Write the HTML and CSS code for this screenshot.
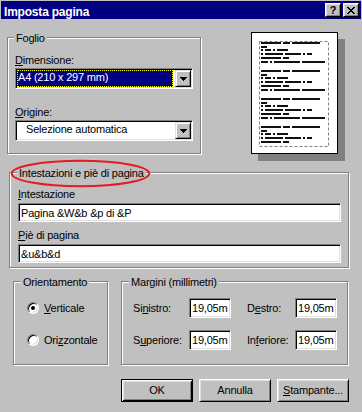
FILE: index.html
```html
<!DOCTYPE html>
<html lang="it">
<head>
  <meta charset="UTF-8">
  <title>Imposta pagina</title>
  <link rel="stylesheet" href="styles.css">
</head>
<body>
  <div class="dialog">
    <div class="titlebar">
      <span class="title">Imposta pagina</span>
      <div class="title-btns">
        <div class="tbtn help">?</div>
        <div class="tbtn">
          <svg width="8" height="7" viewBox="0 0 8 7"><path d="M0 0h2v1H0zM6 0h2v1H6zM1 1h2v1H1zM5 1h2v1H5zM2 2h4v1H2zM3 3h2v1H3zM2 4h4v1H2zM1 5h2v1H1zM5 5h2v1H5zM0 6h2v1H0zM6 6h2v1H6z"/></svg>
        </div>
      </div>
    </div>

    <div class="row top-row">
      <div class="group foglio">
        <div class="group-title">Foglio</div>
        <div class="label first"><u>D</u>imensione:</div>
        <div class="combo">
          <div class="combo-value selected">A4 (210 x 297 mm)</div>
          <div class="combo-arrow"><svg width="7" height="4" viewBox="0 0 7 4"><path d="M0 0h7v1H0zM1 1h5v1H1zM2 2h3v1H2zM3 3h1v1H3z"/></svg></div>
        </div>
        <div class="label gap"><u>O</u>rigine:</div>
        <div class="combo">
          <div class="combo-value indent">Selezione automatica</div>
          <div class="combo-arrow"><svg width="7" height="4" viewBox="0 0 7 4"><path d="M0 0h7v1H0zM1 1h5v1H1zM2 2h3v1H2zM3 3h1v1H3z"/></svg></div>
        </div>
      </div>

      <!-- anteprima pagina -->
      <div class="preview">
        <svg width="85" height="120" viewBox="0 0 85 120">
          <rect x="7.5" y="8.5" width="69" height="105" fill="none" stroke="#808080" stroke-dasharray="3 2"/>
          <g fill="#111">
            <path d="M9 9h20v2H9zM31 9h7v2h-7zM40 9h28v2H40zM9 13h6v2H9zM9 16h2v2H9zM13 16h6v2h-6zM21 16h2v2h-2zM25 16h11v2H25zM9 20h2v2H9zM13 20h18v2H13zM33 20h16v2H33zM51 20h2v2h-2zM55 20h5v2h-5zM9 24h20v2H9zM31 24h6v2h-6zM9 28h7v2H9zM18 28h2v2h-2zM22 28h26v2H22zM50 28h23v2H50z"/>
            <path transform="translate(0 28)" d="M9 9h20v2H9zM31 9h7v2h-7zM40 9h28v2H40zM9 13h6v2H9zM9 16h2v2H9zM13 16h6v2h-6zM21 16h2v2h-2zM25 16h11v2H25zM9 20h2v2H9zM13 20h18v2H13zM33 20h16v2H33zM51 20h2v2h-2zM55 20h5v2h-5zM9 24h20v2H9zM31 24h6v2h-6zM9 28h7v2H9zM18 28h2v2h-2zM22 28h26v2H22zM50 28h23v2H50z"/>
            <path transform="translate(0 56)" d="M9 9h20v2H9zM31 9h7v2h-7zM40 9h28v2H40zM9 13h6v2H9zM9 16h2v2H9zM13 16h6v2h-6zM21 16h2v2h-2zM25 16h11v2H25zM9 20h2v2H9zM13 20h18v2H13zM33 20h16v2H33zM51 20h2v2h-2zM55 20h5v2h-5zM9 24h20v2H9zM31 24h6v2h-6zM9 28h7v2H9zM18 28h2v2h-2zM22 28h26v2H22zM50 28h23v2H50z"/>
            <path transform="translate(0 84)" d="M9 9h20v2H9zM31 9h7v2h-7zM40 9h28v2H40zM9 13h6v2H9zM9 16h2v2H9zM13 16h6v2h-6zM21 16h2v2h-2zM25 16h11v2H25zM9 20h2v2H9zM13 20h18v2H13zM33 20h16v2H33zM51 20h2v2h-2zM55 20h5v2h-5zM9 24h20v2H9zM31 24h6v2h-6z"/>
          </g>
        </svg>
      </div>
    </div>

    <div class="group headers">
      <div class="group-title">Intestazioni e piè di pagina</div>
      <div class="label h-first"><u>I</u>ntestazione</div>
      <input class="edit wide" type="text" value="Pagina &amp;W&amp;b &amp;p di &amp;P">
      <div class="label h-gap"><u>P</u>iè di pagina</div>
      <input class="edit wide" type="text" value="&amp;u&amp;b&amp;d">
    </div>

    <div class="row bottom-row">
      <div class="group orient">
        <div class="group-title">Orientamento</div>
        <div class="radio-row first">
          <span class="radio checked"></span>
          <span><u>V</u>erticale</span>
        </div>
        <div class="radio-row second">
          <span class="radio"></span>
          <span>Ori<u>z</u>zontale</span>
        </div>
      </div>

      <div class="group margins">
        <div class="group-title">Margini (millimetri)</div>
        <div class="margin-row first">
          <span class="m-label">Si<u>n</u>istro:</span>
          <input class="edit small" type="text" value="19,05mm">
          <span class="m-label right">D<u>e</u>stro:</span>
          <input class="edit small" type="text" value="19,05mm">
        </div>
        <div class="margin-row second">
          <span class="m-label">S<u>u</u>periore:</span>
          <input class="edit small" type="text" value="19,05mm">
          <span class="m-label right">In<u>f</u>eriore:</span>
          <input class="edit small" type="text" value="19,05mm">
        </div>
      </div>
    </div>

    <div class="actions">
      <button class="btn default">OK</button>
      <button class="btn">Annulla</button>
      <button class="btn"><u>S</u>tampante...</button>
    </div>

    <svg class="mark" width="142" height="30" viewBox="0 0 142 30">
      <ellipse cx="70.5" cy="14.5" rx="68.7" ry="12.7" fill="none" stroke="#e51b23" stroke-width="2"/>
    </svg>
  </div>
</body>
</html>
```

FILE: styles.css
```css
* {
  box-sizing: border-box;
}
body {
  margin: 0;
  background: #c0c0c0;
  color: #000;
  font: 11px/13px "Liberation Sans", Arial, sans-serif;
  letter-spacing: -0.2px;
}
.dialog {
  position: relative;
  width: 362px;
  height: 412px;
  padding-top: 1px;
  overflow: hidden;
}

/* barra del titolo */
.titlebar {
  display: flex;
  justify-content: space-between;
  width: 360px;
  height: 18px;
  margin-left: 1px;
  background: #000080;
}
.title {
  color: #fff;
  font-weight: bold;
  font-size: 12px;
  line-height: 18px;
  padding: 2px 0 0 3px;
}
.title-btns {
  display: flex;
  gap: 2px;
  margin: 2px 2px 0 0;
}
.tbtn {
  display: flex;
  align-items: center;
  justify-content: center;
  width: 16px;
  height: 14px;
  background: #c0c0c0;
  border: 1px solid;
  border-color: #fff #000 #000 #fff;
  box-shadow: inset 1px 1px #dfdfdf, inset -1px -1px #808080;
}
.tbtn.help {
  font-weight: bold;
  font-size: 11px;
  line-height: 12px;
  letter-spacing: 0;
}

.row {
  display: flex;
  align-items: flex-start;
}

/* cornici incise */
.group {
  border: 1px solid #808080;
  box-shadow: inset 1px 1px #fff, 1px 1px #fff;
}
.group-title {
  width: fit-content;
  margin-top: -6px;
  padding: 0 2px;
  background: #c0c0c0;
}
.label {
  line-height: 13px;
}

/* Foglio */
.foglio {
  width: 194px;
  margin: 18px 0 0 7px;
  padding: 0 0 12px 7px;
}
.foglio .group-title {
  margin-left: -1px;
}
.foglio .label.first {
  margin: 9px 0 1px;
}
.foglio .label.gap {
  margin: 17px 0 1px;
}
.combo {
  display: flex;
  width: 178px;
  height: 21px;
  padding: 1px;
  background: #fff;
  border: 1px solid;
  border-color: #808080 #fff #fff #808080;
  box-shadow: inset 1px 1px #000, inset -1px -1px #dfdfdf;
}
.combo-value {
  flex: 1;
  height: 17px;
  margin-right: 2px;
  line-height: 15px;
  padding-left: 1px;
  white-space: nowrap;
}
.combo-value.selected {
  background: #000080;
  color: #fff;
  outline: 1px dotted #ffff00;
  outline-offset: -1px;
}
.combo-value.indent {
  padding-left: 9px;
}
.combo-arrow {
  display: flex;
  align-items: center;
  justify-content: center;
  width: 16px;
  height: 17px;
  background: #c0c0c0;
  border: 1px solid;
  border-color: #dfdfdf #000 #000 #dfdfdf;
  box-shadow: inset 1px 1px #fff, inset -1px -1px #808080;
}

/* anteprima */
.preview {
  width: 87px;
  height: 122px;
  margin: 13px 0 0 50px;
  background: #fff;
  border: 1px solid #000;
  box-shadow: 7px 7px 0 #808080;
}
.preview svg {
  display: block;
}

/* Intestazioni */
.headers {
  width: 340px;
  margin: 18px 0 0 9px;
  padding: 0 7px 4px 8px;
}
.headers .group-title {
  margin-left: -1px;
}
.headers .h-first {
  margin: 8px 0 2px;
}
.headers .h-gap {
  margin: 7px 0 2px;
}
.edit {
  display: block;
  height: 19px;
  padding: 0 2px;
  background: #fff;
  border: 1px solid;
  border-color: #808080 #fff #fff #808080;
  box-shadow: inset 1px 1px #000, inset -1px -1px #dfdfdf;
  font: inherit;
  letter-spacing: inherit;
  color: #000;
  outline: none;
}
.edit.wide {
  width: 100%;
}
.edit.small {
  width: 42px;
  height: 20px;
}

/* Orientamento */
.bottom-row {
  margin-top: 13px;
}
.orient {
  width: 95px;
  height: 84px;
  margin-left: 13px;
  padding-left: 13px;
}
.orient .group-title {
  margin-left: -6px;
}
.radio-row {
  display: flex;
  align-items: center;
  gap: 5px;
  height: 16px;
}
.radio-row.first {
  margin-top: 11px;
}
.radio-row.second {
  margin-top: 16px;
}
.radio {
  position: relative;
  width: 12px;
  height: 12px;
  border-radius: 50%;
  background: #fff;
  border: 1px solid;
  border-color: #808080 #fff #fff #808080;
  box-shadow: inset 1px 1px #000, inset -1px -1px #dfdfdf;
}
.radio.checked::after {
  content: "";
  position: absolute;
  left: 3px;
  top: 3px;
  width: 4px;
  height: 4px;
  border-radius: 50%;
  background: #000;
}

/* Margini */
.margins {
  width: 227px;
  height: 84px;
  margin-left: 13px;
  padding-left: 11px;
}
.margins .group-title {
  margin-left: -4px;
}
.margin-row {
  display: flex;
  align-items: center;
  height: 20px;
}
.margin-row.first {
  margin-top: 9px;
}
.margin-row.second {
  margin-top: 12px;
}
.m-label {
  width: 56px;
}
.m-label.right {
  width: 48px;
  margin-left: 16px;
}

/* pulsanti */
.actions {
  display: flex;
  gap: 6px;
  margin: 14px 0 0 121px;
}
.btn {
  width: 72px;
  height: 23px;
  padding: 0;
  background: #c0c0c0;
  border: 1px solid;
  border-color: #fff #000 #000 #fff;
  box-shadow: inset 1px 1px #dfdfdf, inset -1px -1px #808080;
  font: inherit;
  letter-spacing: inherit;
  color: #000;
}
.btn.default {
  border-color: #000;
  box-shadow: inset 1px 1px #fff, inset -1px -1px #000, inset 2px 2px #dfdfdf, inset -2px -2px #808080;
}

/* segno rosso */
.mark {
  position: absolute;
  left: 10px;
  top: 159px;
}
```
